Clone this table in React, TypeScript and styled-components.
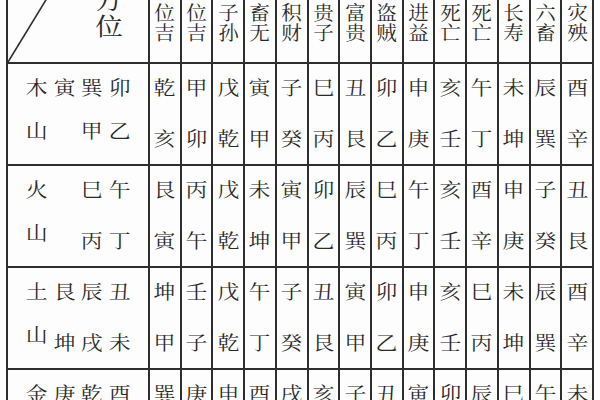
import styled, { createGlobalStyle } from "styled-components";

const GlobalStyle = createGlobalStyle`
    html, body {
        margin: 0;
        padding: 0;
        background: #fdfdfd;
    }
`

const LINE = "#2e2e2e"
const INK = "#2a2a2a"
const FONT = `"Noto Serif CJK SC", "Noto Sans CJK SC", serif`

const Page = styled.div`
    width: 600px;
    height: 400px;
    overflow: hidden;
    background: #fdfdfd;
    padding-left: 6px;
    box-sizing: border-box;
    font-family: ${FONT};
    color: ${INK};
`

const Table = styled.div`
    width: 588px;
    margin-top: -28px;
    border-left: 2px solid ${LINE};
    box-sizing: border-box;
    display: grid;
    grid-template-columns: 142px repeat(14, 1fr);
    grid-template-rows: 92px repeat(4, 102px);
`

const Cell = styled.div`
    box-sizing: border-box;
    border-right: 2px solid ${LINE};
    border-bottom: 2px solid ${LINE};
    min-width: 0;
`

const CornerCell = styled(Cell)`
    position: relative;
    display: flex;
    flex-direction: column;
    justify-content: flex-end;
    padding: 0 0 24px 91px;
    font-size: 24px;
    line-height: 26px;
`

const Diagonal = styled.svg`
    position: absolute;
    left: 0;
    top: 0;
`

const HeadCell = styled(Cell)`
    display: flex;
    flex-direction: column;
    justify-content: flex-end;
    align-items: center;
    padding-bottom: 20px;
    font-size: 19px;
    line-height: 20px;
`

const HeadChar = styled.span`
    display: block;
    transform: scaleX(1.08);
`

const LabelCell = styled(Cell)`
    padding: 13px 0 0 15px;
    display: grid;
    grid-template-columns: repeat(4, 27.5px);
    grid-auto-rows: 20px;
    row-gap: 31px;
    align-content: start;
    font-size: 19px;
    line-height: 20px;
`

const LabelChar = styled.span<{ $raise: number }>`
    text-align: center;
    transform: translateY(${props => -props.$raise}px) scaleX(1.15);
`

const DataCell = styled(Cell)`
    display: flex;
    flex-direction: column;
    align-items: center;
    padding-top: 13px;
    gap: 31px;
    font-size: 19px;
    line-height: 20px;
`

const Glyph = styled.span`
    display: block;
    height: 20px;
    transform: scaleX(1.15);
`

const Stretch = styled.span`
    display: block;
    transform: scaleX(1.15);
`

const HEADERS = ["位吉", "位吉", "子孙", "畜无", "积财", "贵子", "富贵", "盗贼", "进益", "死亡", "死亡", "长寿", "六畜", "灾殃"]

type Row = {
    label: string[][]
    lift: boolean
    top: string
    bottom: string
}

const ROWS: Row[] = [
    {
        label: [["木", "寅", "巽", "卯"], ["山", "", "甲", "乙"]],
        lift: true,
        top: "乾甲戊寅子巳丑卯申亥午未辰酉",
        bottom: "亥卯乾甲癸丙艮乙庚壬丁坤巽辛",
    },
    {
        label: [["火", "", "巳", "午"], ["山", "", "丙", "丁"]],
        lift: false,
        top: "艮丙戊未寅卯辰巳午亥酉申子丑",
        bottom: "寅午乾坤甲乙巽丙丁壬辛庚癸艮",
    },
    {
        label: [["土", "艮", "辰", "丑"], ["山", "坤", "戌", "未"]],
        lift: false,
        top: "坤壬戊午子丑寅卯申亥巳未辰酉",
        bottom: "甲子乾丁癸艮甲乙庚壬丙坤巽辛",
    },
    {
        label: [["金", "庚", "乾", "酉"], ["", "", "", ""]],
        lift: false,
        top: "巽庚申酉戌亥子丑寅卯辰巳午未",
        bottom: "",
    },
]

export default function App() {
    return (
        <>
            <GlobalStyle />
            <Page>
                <Table>
                    <CornerCell>
                        <Diagonal width="60" height="92" viewBox="0 0 60 92">
                            <line x1="0" y1="90" x2="55" y2="0" stroke={LINE} strokeWidth="1.6" />
                        </Diagonal>
                        <Stretch>方</Stretch>
                        <Stretch>位</Stretch>
                    </CornerCell>
                    {HEADERS.map((h, i) => (
                        <HeadCell key={i}>
                            {h.split("").map((c, j) => <HeadChar key={j}>{c}</HeadChar>)}
                        </HeadCell>
                    ))}
                    {ROWS.map((row, r) => [
                        <LabelCell key={`l${r}`}>
                            {row.label[0].map((c, i) => <LabelChar key={`a${i}`} $raise={0}>{c}</LabelChar>)}
                            {row.label[1].map((c, i) => (
                                <LabelChar key={`b${i}`} $raise={i === 0 || row.lift ? 8 : 0}>{c}</LabelChar>
                            ))}
                        </LabelCell>,
                        ...row.top.split("").map((c, i) => (
                            <DataCell key={`d${r}-${i}`}>
                                <Glyph>{c}</Glyph>
                                <Glyph>{row.bottom[i] ?? ""}</Glyph>
                            </DataCell>
                        )),
                    ])}
                </Table>
            </Page>
        </>
    )
}
